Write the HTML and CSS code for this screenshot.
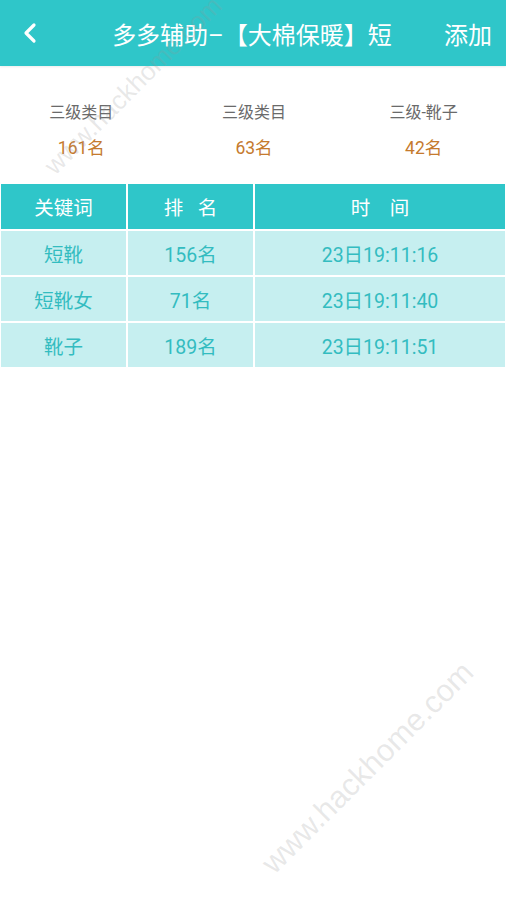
FILE: index.html
```html
<!DOCTYPE html>
<html lang="zh">
<head>
<meta charset="UTF-8" />
<meta name="viewport" content="width=device-width, initial-scale=1" />
<title>多多辅助</title>
<link rel="stylesheet" href="styles.css">
</head>
<body>

<!-- Barre du haut -->
<header class="topbar">
  <a class="back" href="#" aria-label="返回">
    <svg viewBox="0 0 14 22" aria-hidden="true">
      <path d="M11 3L3 11l8 8" />
    </svg>
  </a>
  <h1 class="title">多多辅助–【大棉保暖】短</h1>
  <a class="add" href="#">添加</a>
</header>

<section class="stats">
  <div class="stat">
    <span class="stat-label">三级类目</span>
    <span class="stat-value">161名</span>
  </div>
  <div class="stat">
    <span class="stat-label">三级类目</span>
    <span class="stat-value">63名</span>
  </div>
  <div class="stat">
    <span class="stat-label">三级-靴子</span>
    <span class="stat-value">42名</span>
  </div>
</section>

<table class="rank-table">
  <thead>
    <tr>
      <th class="col-kw">关键词</th>
      <th class="col-rank">排&nbsp;&nbsp;&nbsp;名</th>
      <th class="col-time">时&nbsp;&nbsp;&nbsp;&nbsp;间</th>
    </tr>
  </thead>
  <tbody>
    <tr><td>短靴</td><td>156名</td><td>23日19:11:16</td></tr>
    <tr><td>短靴女</td><td>71名</td><td>23日19:11:40</td></tr>
    <tr><td>靴子</td><td>189名</td><td>23日19:11:51</td></tr>
  </tbody>
</table>

<!-- filigrane -->
<div class="watermark wm-top">www.hackhome.com</div>
<div class="watermark wm-bottom">www.hackhome.com</div>

</body>
</html>
```

FILE: styles.css
```css
body {
  margin: 0;
  font-family: Roboto, "Noto Sans CJK SC", "Noto Sans", sans-serif;
  background: #fff;
  position: relative;
  min-height: 900px;
  overflow: hidden;
}
/* Barre du haut */
.topbar {
  height: 66px;
  background: #2fc6c9;
  display: flex;
  align-items: center;
  color: #fff;
  box-shadow: 0 1px 2px rgba(0,0,0,0.08);
}
.back {
  width: 62px;
  display: flex;
  justify-content: flex-start;
  padding-left: 22px;
  box-sizing: border-box;
}
.back svg {
  width: 16px;
  height: 22px;
  fill: none;
  stroke: #fff;
  stroke-width: 3.2;
  stroke-linecap: round;
  stroke-linejoin: round;
}
.title {
  flex: 1;
  margin: 0;
  font-size: 24px;
  font-weight: 400;
  text-align: center;
  padding-left: 10px;
  white-space: nowrap;
}
.add {
  color: #fff;
  text-decoration: none;
  font-size: 24px;
  padding: 0 14px 0 12px;
}
/* Statistiques */
.stats {
  display: grid;
  grid-template-columns: repeat(3, 1fr);
  padding: 36px 0 22px;
}
.stat {
  display: flex;
  flex-direction: column;
  align-items: center;
  gap: 12px;
}
.stat:first-child { padding-right: 6px; }
.stat:nth-child(2) { padding-left: 2px; }
.stat:last-child { padding-left: 4px; }
.stat-label {
  font-size: 16px;
  color: #6a6a6a;
  line-height: 22px;
}
.stat-value {
  font-size: 17.5px;
  color: #c57a2e;
  line-height: 24px;
}
/* Tableau */
.rank-table {
  width: 508px;
  margin: 0 0 0 -1px;
  border-collapse: separate;
  border-spacing: 2px;
  table-layout: fixed;
}
.rank-table th,
.rank-table td {
  padding: 0;
  text-align: center;
  font-weight: 400;
  font-size: 19.5px;
}
.rank-table thead th {
  background: #2fc6c9;
  color: #fff;
  height: 45px;
}
.rank-table td {
  background: #c6eff0;
  color: #33bcc0;
  height: 44px;
}
.col-kw { width: 125px; }
.col-rank { width: 125px; }
/* Filigrane */
.watermark {
  position: absolute;
  font-family: "Liberation Sans", Arial, sans-serif;
  color: rgba(150,150,150,0.22);
  transform: rotate(-45deg);
  transform-origin: left bottom;
  white-space: nowrap;
  pointer-events: none;
}
.wm-top {
  left: 60px;
  top: 150px;
  font-size: 26px;
}
.wm-bottom {
  left: 280px;
  top: 845px;
  font-size: 31px;
}
```
